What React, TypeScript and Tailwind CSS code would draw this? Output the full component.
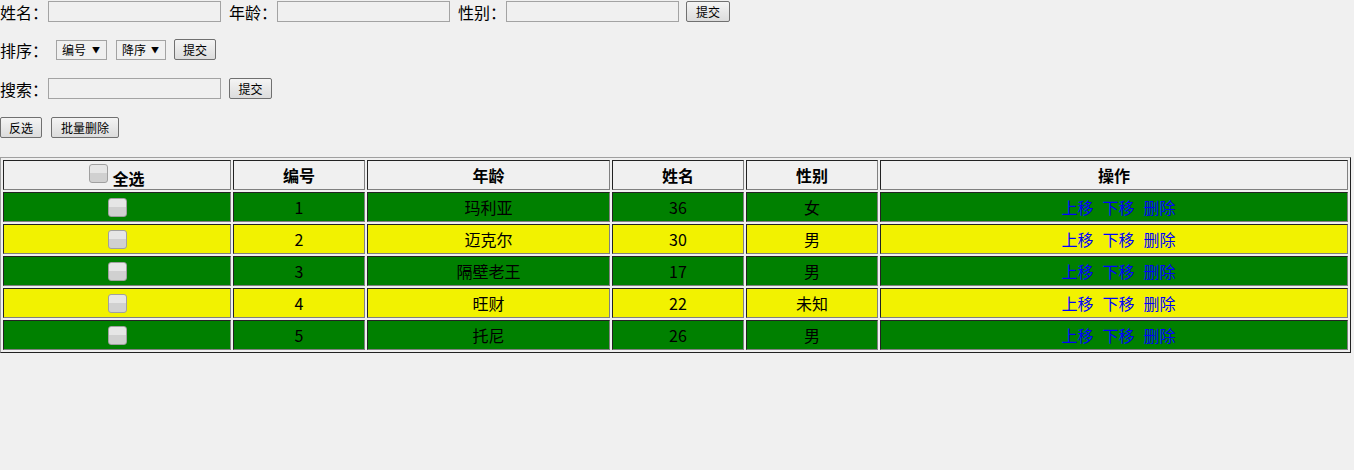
const ROWS = [
  { id: 1, name: '玛利亚', age: 36, sex: '女' },
  { id: 2, name: '迈克尔', age: 30, sex: '男' },
  { id: 3, name: '隔壁老王', age: 17, sex: '男' },
  { id: 4, name: '旺财', age: 22, sex: '未知' },
  { id: 5, name: '托尼', age: 26, sex: '男' },
];

const CELL =
  'h-[30px] p-0 border border-t-[#222222] border-l-[#222222] border-b-[#808080] border-r-[#808080] text-center align-middle';

function Input() {
  return <input type="text" className="w-[173px] h-[21px] border border-[#a3a3a3] bg-[#f0f0f0] outline-none" />;
}

function Btn({ label, w }: { label: string; w: string }) {
  return (
    <button
      className={`${w} h-[21px] flex items-center justify-center rounded-[2px] border border-[#707070] bg-gradient-to-b from-[#f4f4f4] to-[#dcdcdc] text-[12px] leading-none text-black`}
    >
      {label}
    </button>
  );
}

function Select({ label, w }: { label: string; w: string }) {
  return (
    <div className={`${w} h-[20px] flex items-center justify-between pl-[5px] pr-[6px] border border-[#a3a3a3] bg-[#f0f0f0] text-[12px] leading-none`}>
      <span>{label}</span>
      <span className="text-[8px]">▼</span>
    </div>
  );
}

function Check() {
  return (
    <input
      type="checkbox"
      className="appearance-none block w-[19px] h-[19px] rounded-[3px] border border-[#a0a0a0] bg-gradient-to-b from-[#e6e6e6] from-[45%] to-[#d0d0d0] to-[45%]"
    />
  );
}

function Label({ text }: { text: string }) {
  return <span className="w-[48px] text-[16px] leading-none">{text}</span>;
}

export default function App() {
  return (
    <div className="min-h-[470px] w-full bg-[#f0f0f0] text-black font-['Noto_Sans_CJK_SC',sans-serif]">
      <div className="flex items-center h-[23px]">
        <Label text="姓名：" />
        <Input />
        <span className="w-[8px]" />
        <Label text="年龄：" />
        <Input />
        <span className="w-[8px]" />
        <Label text="性别：" />
        <Input />
        <span className="w-[7px]" />
        <Btn label="提交" w="w-[44px]" />
      </div>

      <div className="flex items-center h-[23px] mt-[15px]">
        <Label text="排序：" />
        <span className="w-[8px]" />
        <Select label="编号" w="w-[51px]" />
        <span className="w-[9px]" />
        <Select label="降序" w="w-[50px]" />
        <span className="w-[8px]" />
        <Btn label="提交" w="w-[42px]" />
      </div>

      <div className="flex items-center h-[23px] mt-[16px]">
        <Label text="搜索：" />
        <Input />
        <span className="w-[8px]" />
        <Btn label="提交" w="w-[43px]" />
      </div>

      <div className="flex items-center gap-[9px] h-[23px] mt-[16px]">
        <Btn label="反选" w="w-[42px]" />
        <Btn label="批量删除" w="w-[68px]" />
      </div>

      <table className="mt-[18px] w-[1351px] table-fixed border-separate border-spacing-[2px] border border-t-[#a0a0a0] border-l-[#a0a0a0] border-b-[#222222] border-r-[#222222] text-[16px]">
        <thead>
          <tr>
            <th className={`${CELL} w-[228px]`}>
              <div className="flex justify-center items-start gap-[4px]">
                <Check />
                <span className="mt-[5px] leading-[18px] font-bold">全选</span>
              </div>
            </th>
            <th className={`${CELL} w-[132px] font-bold`}>编号</th>
            <th className={`${CELL} w-[243px] font-bold`}>年龄</th>
            <th className={`${CELL} w-[132px] font-bold`}>姓名</th>
            <th className={`${CELL} w-[132px] font-bold`}>性别</th>
            <th className={`${CELL} w-[468px] font-bold`}>操作</th>
          </tr>
        </thead>
        <tbody>
          {ROWS.map((r, i) => (
            <tr key={r.id} className={i % 2 === 0 ? 'bg-[#008000]' : 'bg-[#f2f200]'}>
              <td className={CELL}>
                <div className="flex justify-center">
                  <Check />
                </div>
              </td>
              <td className={CELL}>{r.id}</td>
              <td className={CELL}>{r.name}</td>
              <td className={CELL}>{r.age}</td>
              <td className={CELL}>{r.sex}</td>
              <td className={CELL}>
                <div className="flex justify-center gap-[9px] pl-[9px] text-[#0000ff]">
                  <a className="cursor-pointer">上移</a>
                  <a className="cursor-pointer">下移</a>
                  <a className="cursor-pointer">删除</a>
                </div>
              </td>
            </tr>
          ))}
        </tbody>
      </table>
    </div>
  );
}
